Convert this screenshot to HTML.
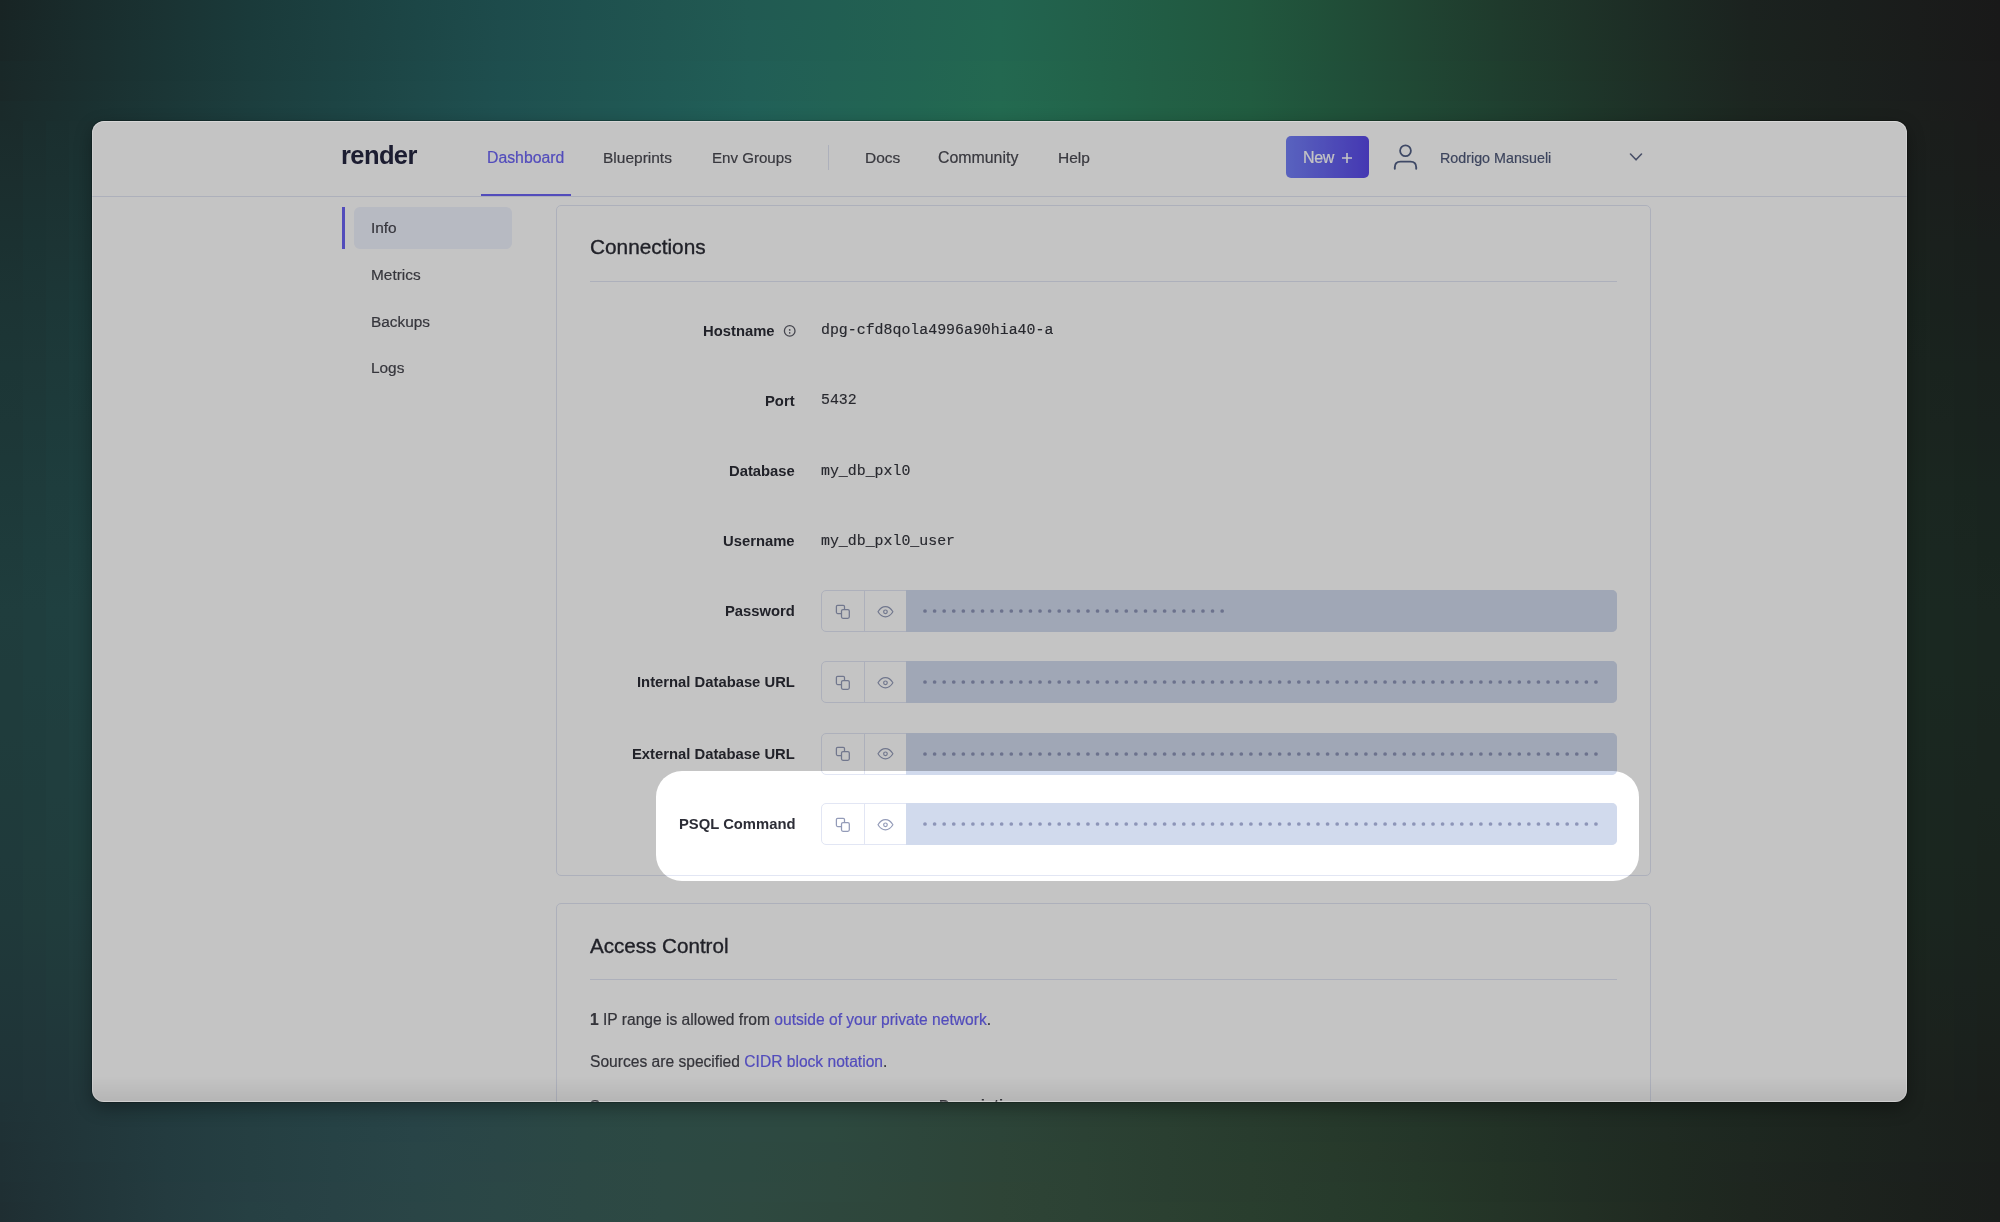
<!DOCTYPE html>
<html><head><meta charset="utf-8"><style>
html,body{margin:0;padding:0;width:2000px;height:1222px;overflow:hidden;}
body{position:relative;background:#1b2222;font-family:"Liberation Sans",sans-serif;}
#bg{position:absolute;left:0;top:0;width:2000px;height:1222px;background:#1a1c1c;}
.band{position:absolute;}
#win{position:absolute;left:92px;top:121px;width:1815px;height:981px;border-radius:12px;overflow:hidden;background:#fff;box-shadow:0 0 0 1px rgba(0,0,0,0.2),0 6px 18px rgba(0,0,0,0.32);}
#in{position:absolute;left:-92px;top:-121px;width:2000px;height:1222px;}
.t{position:absolute;white-space:nowrap;line-height:1;will-change:transform;}
</style></head><body>
<div id="bg"></div>
<div class="band" style="left:0;top:0.00px;width:2000px;height:20.67px;background:linear-gradient(90deg,#182424 0.0%,#192c2c 4.2%,#1a3333 8.3%,#1a3a3a 12.5%,#1b4040 16.7%,#1c4646 20.8%,#1d4b4b 25.0%,#1e504e 29.2%,#205550 33.3%,#215a52 37.5%,#215e52 41.7%,#226151 45.8%,#226450 50.0%,#22604a 54.2%,#215c44 58.3%,#21573e 62.5%,#204e38 66.7%,#204432 70.8%,#1f3a2c 75.0%,#1e3228 79.2%,#1c2a23 83.3%,#1b221f 87.5%,#1a1f1d 91.7%,#1a1c1b 95.8%,#191919 100.0%);"></div>
<div class="band" style="left:0;top:20.17px;width:2000px;height:20.67px;background:linear-gradient(90deg,#182626 0.0%,#192d2d 4.2%,#1a3434 8.3%,#1a3b3b 12.5%,#1c4141 16.7%,#1c4646 20.8%,#1e4c4c 25.0%,#1f514f 29.2%,#205651 33.3%,#215c54 37.5%,#215f52 41.7%,#226251 45.8%,#226650 50.0%,#22614a 54.2%,#215d44 58.3%,#21583e 62.5%,#204f39 66.7%,#204533 70.8%,#1f3c2d 75.0%,#1e3328 79.2%,#1c2b24 83.3%,#1b231f 87.5%,#1b201d 91.7%,#1a1c1b 95.8%,#191919 100.0%);"></div>
<div class="band" style="left:0;top:40.33px;width:2000px;height:20.67px;background:linear-gradient(90deg,#192626 0.0%,#1a2e2e 4.2%,#1a3535 8.3%,#1b3c3c 12.5%,#1c4141 16.7%,#1d4747 20.8%,#1e4d4d 25.0%,#1f5250 29.2%,#205752 33.3%,#215c54 37.5%,#216053 41.7%,#226352 45.8%,#226650 50.0%,#22624a 54.2%,#215e45 58.3%,#21593f 62.5%,#205039 66.7%,#204633 70.8%,#1f3c2e 75.0%,#1e3429 79.2%,#1d2c24 83.3%,#1b241f 87.5%,#1b201d 91.7%,#1a1d1b 95.8%,#191919 100.0%);"></div>
<div class="band" style="left:0;top:60.50px;width:2000px;height:20.67px;background:linear-gradient(90deg,#192828 0.0%,#1a2e2e 4.2%,#1a3535 8.3%,#1b3c3c 12.5%,#1c4242 16.7%,#1d4848 20.8%,#1e4e4e 25.0%,#1f5350 29.2%,#205853 33.3%,#215e56 37.5%,#226154 41.7%,#226452 45.8%,#236850 50.0%,#22634a 54.2%,#225e45 58.3%,#215a3f 62.5%,#20503a 66.7%,#204734 70.8%,#1f3e2e 75.0%,#1e3529 79.2%,#1d2d24 83.3%,#1c2420 87.5%,#1b211e 91.7%,#1a1d1c 95.8%,#1a1a1a 100.0%);"></div>
<div class="band" style="left:0;top:80.67px;width:2000px;height:20.67px;background:linear-gradient(90deg,#1a2828 0.0%,#1a2f2f 4.2%,#1b3636 8.3%,#1c3d3d 12.5%,#1c4343 16.7%,#1e4949 20.8%,#1e4f4f 25.0%,#1f5451 29.2%,#205954 33.3%,#215e56 37.5%,#226254 41.7%,#226552 45.8%,#236850 50.0%,#22644a 54.2%,#225f45 58.3%,#215b40 62.5%,#20513a 66.7%,#204834 70.8%,#1f3e2f 75.0%,#1e362a 79.2%,#1d2d25 83.3%,#1c2520 87.5%,#1b211e 91.7%,#1a1d1c 95.8%,#1a1a1a 100.0%);"></div>
<div class="band" style="left:0;top:100.83px;width:2000px;height:40.17px;background:linear-gradient(90deg,#1a2a2a 0.0%,#1a3030 4.2%,#1b3737 8.3%,#1c3e3e 12.5%,#1d4444 16.7%,#1e4a4a 20.8%,#1f5050 25.0%,#205552 29.2%,#205a55 33.3%,#216058 37.5%,#226355 41.7%,#226652 45.8%,#236a50 50.0%,#22654b 54.2%,#226045 58.3%,#215c40 62.5%,#20523a 66.7%,#204935 70.8%,#1f4030 75.0%,#1e372a 79.2%,#1d2e25 83.3%,#1c2620 87.5%,#1b221e 91.7%,#1b1e1c 95.8%,#1a1a1a 100.0%);"></div>
<div class="band" style="left:0;top:1082.00px;width:2000px;height:40.50px;background:linear-gradient(90deg,#1f3236 0.0%,#21363a 4.2%,#223b3e 8.3%,#243f42 12.5%,#264245 16.7%,#284447 20.8%,#294646 25.0%,#2b4844 29.2%,#2c4943 33.3%,#2d4942 37.5%,#2d4940 41.7%,#2d463c 45.8%,#2c4438 50.0%,#2b4135 54.2%,#293f31 58.3%,#283c2e 62.5%,#26392b 66.7%,#243529 70.8%,#223126 75.0%,#202d24 79.2%,#1e2a22 83.3%,#1d2720 87.5%,#1c241e 91.7%,#1b211d 95.8%,#1a1e1b 100.0%);"></div>
<div class="band" style="left:0;top:1122.00px;width:2000px;height:20.50px;background:linear-gradient(90deg,#1f3135 0.0%,#21363a 4.2%,#233b3f 8.3%,#253f42 12.5%,#264245 16.7%,#284447 20.8%,#2a4646 25.0%,#2b4844 29.2%,#2c4943 33.3%,#2d4942 37.5%,#2d493f 41.7%,#2d463b 45.8%,#2c4438 50.0%,#2b4134 54.2%,#2a3f31 58.3%,#283c2e 62.5%,#26392b 66.7%,#243629 70.8%,#223226 75.0%,#202d24 79.2%,#1f2a22 83.3%,#1d2720 87.5%,#1c241e 91.7%,#1b211d 95.8%,#1a1e1b 100.0%);"></div>
<div class="band" style="left:0;top:1142.00px;width:2000px;height:20.50px;background:linear-gradient(90deg,#1f3034 0.0%,#21363a 4.2%,#233b3f 8.3%,#253f42 12.5%,#274245 16.7%,#294547 20.8%,#2a4646 25.0%,#2b4844 29.2%,#2c4943 33.3%,#2d4941 37.5%,#2d483f 41.7%,#2d463b 45.8%,#2d4437 50.0%,#2b4234 54.2%,#2a3f31 58.3%,#283d2e 62.5%,#273a2b 66.7%,#253629 70.8%,#223226 75.0%,#202e24 79.2%,#1f2a21 83.3%,#1e2720 87.5%,#1c241e 91.7%,#1b211d 95.8%,#1a1e1b 100.0%);"></div>
<div class="band" style="left:0;top:1162.00px;width:2000px;height:20.50px;background:linear-gradient(90deg,#1f3034 0.0%,#213539 4.2%,#233b3f 8.3%,#253f42 12.5%,#274245 16.7%,#294547 20.8%,#2b4646 25.0%,#2c4844 29.2%,#2d4943 33.3%,#2d4941 37.5%,#2e483e 41.7%,#2d463b 45.8%,#2d4437 50.0%,#2c4234 54.2%,#2a3f31 58.3%,#293d2e 62.5%,#273a2c 66.7%,#253729 70.8%,#233326 75.0%,#212e24 79.2%,#1f2a21 83.3%,#1e2620 87.5%,#1c231e 91.7%,#1b201d 95.8%,#1a1d1b 100.0%);"></div>
<div class="band" style="left:0;top:1182.00px;width:2000px;height:20.50px;background:linear-gradient(90deg,#1f2f33 0.0%,#213539 4.2%,#243b3f 8.3%,#263f43 12.5%,#284245 16.7%,#294546 20.8%,#2b4746 25.0%,#2c4844 29.2%,#2d4943 33.3%,#2e4941 37.5%,#2e483e 41.7%,#2e463a 45.8%,#2e4436 50.0%,#2c4234 54.2%,#2a3f31 58.3%,#293d2e 62.5%,#273b2c 66.7%,#253829 70.8%,#233326 75.0%,#212e24 79.2%,#1f2a21 83.3%,#1e261f 87.5%,#1d231e 91.7%,#1b201c 95.8%,#1a1d1b 100.0%);"></div>
<div class="band" style="left:0;top:1202.00px;width:2000px;height:20.50px;background:linear-gradient(90deg,#1f2e32 0.0%,#213539 4.2%,#243b3f 8.3%,#264043 12.5%,#284245 16.7%,#2a4546 20.8%,#2b4746 25.0%,#2c4844 29.2%,#2d4943 33.3%,#2e4940 37.5%,#2e473d 41.7%,#2e463a 45.8%,#2e4436 50.0%,#2c4234 54.2%,#2b4031 58.3%,#293e2e 62.5%,#273b2c 66.7%,#253929 70.8%,#243427 75.0%,#222f24 79.2%,#202a21 83.3%,#1e261f 87.5%,#1d231e 91.7%,#1b201c 95.8%,#1a1d1b 100.0%);"></div>
<div class="band" style="left:0.00px;top:121px;width:23.50px;height:981px;background:linear-gradient(180deg,#1a2b2b 0.0%,#1b2e2e 6.2%,#1b3131 12.5%,#1c3434 18.8%,#1c3636 25.0%,#1d3737 31.2%,#1d3939 37.5%,#1e3b3b 43.8%,#1f3d3d 50.0%,#1f3c3c 56.2%,#1f3c3c 62.5%,#1f3b3b 68.8%,#1f3a3b 75.0%,#1f393a 81.2%,#1f3739 87.5%,#1f3538 93.8%,#1f3337 100.0%);"></div>
<div class="band" style="left:23.00px;top:121px;width:23.50px;height:981px;background:linear-gradient(180deg,#1a2d2d 0.0%,#1b3030 6.2%,#1b3333 12.5%,#1c3535 18.8%,#1d3737 25.0%,#1d3939 31.2%,#1e3b3b 37.5%,#1e3d3d 43.8%,#1f3e3e 50.0%,#1f3e3e 56.2%,#1f3d3d 62.5%,#1f3c3c 68.8%,#203c3c 75.0%,#203b3b 81.2%,#20383a 87.5%,#203639 93.8%,#203438 100.0%);"></div>
<div class="band" style="left:46.00px;top:121px;width:23.50px;height:981px;background:linear-gradient(180deg,#1a2f2f 0.0%,#1b3131 6.2%,#1c3434 12.5%,#1c3737 18.8%,#1d3939 25.0%,#1d3b3b 31.2%,#1e3d3d 37.5%,#1f3e3e 43.8%,#1f4040 50.0%,#1f3f3f 56.2%,#203e3e 62.5%,#203e3e 68.8%,#203d3d 75.0%,#203c3c 81.2%,#203a3b 87.5%,#20373a 93.8%,#203539 100.0%);"></div>
<div class="band" style="left:69.00px;top:121px;width:23.50px;height:981px;background:linear-gradient(180deg,#1b3030 0.0%,#1b3333 6.2%,#1c3636 12.5%,#1c3939 18.8%,#1d3b3b 25.0%,#1e3c3c 31.2%,#1e3e3e 37.5%,#1f4040 43.8%,#204141 50.0%,#204141 56.2%,#204040 62.5%,#203f3f 68.8%,#203f3e 75.0%,#213d3e 81.2%,#213b3c 87.5%,#21393b 93.8%,#21363a 100.0%);"></div>
<div class="band" style="left:1907.00px;top:121px;width:23.75px;height:981px;background:linear-gradient(180deg,#1b1e1c 0.0%,#1a1f1d 6.2%,#1a211d 12.5%,#19231e 18.8%,#1a241f 25.0%,#1a251f 31.2%,#1a2720 37.5%,#1a2821 43.8%,#1a2922 50.0%,#1a2921 56.2%,#1a2821 62.5%,#1a2720 68.8%,#1a2720 75.0%,#1a261f 81.2%,#1b241e 87.5%,#1b221e 93.8%,#1b211d 100.0%);"></div>
<div class="band" style="left:1930.25px;top:121px;width:23.75px;height:981px;background:linear-gradient(180deg,#1a1d1b 0.0%,#1a1e1c 6.2%,#1a201d 12.5%,#19211d 18.8%,#19231e 25.0%,#1a241f 31.2%,#1a2620 37.5%,#1a2721 43.8%,#1a2821 50.0%,#1a2821 56.2%,#1a2720 62.5%,#1a2620 68.8%,#1a261f 75.0%,#1a251f 81.2%,#1a231e 87.5%,#1b221d 93.8%,#1b201c 100.0%);"></div>
<div class="band" style="left:1953.50px;top:121px;width:23.75px;height:981px;background:linear-gradient(180deg,#1a1c1b 0.0%,#1a1d1b 6.2%,#191f1c 12.5%,#19201d 18.8%,#19221e 25.0%,#19231e 31.2%,#19251f 37.5%,#1a2620 43.8%,#1a2721 50.0%,#1a2720 56.2%,#1a2620 62.5%,#1a251f 68.8%,#1a251f 75.0%,#1a241e 81.2%,#1a221e 87.5%,#1a211d 93.8%,#1a1f1c 100.0%);"></div>
<div class="band" style="left:1976.75px;top:121px;width:23.75px;height:981px;background:linear-gradient(180deg,#1a1b1a 0.0%,#1a1c1b 6.2%,#191e1c 12.5%,#191f1c 18.8%,#19211d 25.0%,#19221e 31.2%,#19241f 37.5%,#19251f 43.8%,#1a2620 50.0%,#1a2620 56.2%,#1a251f 62.5%,#1a251f 68.8%,#1a241e 75.0%,#1a231e 81.2%,#1a221d 87.5%,#1a201c 93.8%,#1a1e1b 100.0%);"></div>

<div id="win"><div id="in">
<div class="t" style="left:340.50px;top:143.21px;font-size:25.5px;color:#252640;font-weight:700;font-family:'Liberation Sans',sans-serif;letter-spacing:-0.6px;">render</div>
<div class="t" style="left:487.00px;top:150.13px;font-size:15.8px;color:#6b63f4;font-weight:400;font-family:'Liberation Sans',sans-serif;-webkit-text-stroke-width:0.2px;">Dashboard</div>
<div class="t" style="left:603.00px;top:150.38px;font-size:15.5px;color:#4a4a52;font-weight:400;font-family:'Liberation Sans',sans-serif;-webkit-text-stroke-width:0.2px;">Blueprints</div>
<div class="t" style="left:711.60px;top:150.12px;font-size:15.1px;color:#4a4a52;font-weight:400;font-family:'Liberation Sans',sans-serif;-webkit-text-stroke-width:0.2px;">Env Groups</div>
<div style="position:absolute;left:828px;top:145px;width:1px;height:25px;background:#e2e6f4;"></div>
<div class="t" style="left:865.00px;top:150.38px;font-size:15.5px;color:#4a4a52;font-weight:400;font-family:'Liberation Sans',sans-serif;-webkit-text-stroke-width:0.2px;">Docs</div>
<div class="t" style="left:938.00px;top:150.04px;font-size:15.9px;color:#4a4a52;font-weight:400;font-family:'Liberation Sans',sans-serif;-webkit-text-stroke-width:0.2px;">Community</div>
<div class="t" style="left:1058.00px;top:150.38px;font-size:15.5px;color:#4a4a52;font-weight:400;font-family:'Liberation Sans',sans-serif;-webkit-text-stroke-width:0.2px;">Help</div>
<div style="position:absolute;left:92px;top:196px;width:1815px;height:1px;background:#e2e6f4;"></div>
<div style="position:absolute;left:481px;top:193.5px;width:90px;height:2.5px;background:#6b63f4;"></div>
<div style="position:absolute;left:1285.5px;top:135.8px;width:83.70000000000005px;height:42.69999999999999px;border-radius:5px;background:linear-gradient(90deg,#7481f8,#5a49e8);"></div>
<div class="t" style="left:1303.00px;top:149.96px;font-size:16px;color:#ffffff;font-weight:400;font-family:'Liberation Sans',sans-serif;letter-spacing:-0.4px;-webkit-text-stroke-width:0.2px;">New</div>
<svg style="position:absolute;left:1341px;top:151.5px" width="12" height="12" viewBox="0 0 12 12"><path d="M6 1V11M1 6H11" stroke="#ffffff" stroke-width="1.6" fill="none"/></svg>
<svg style="position:absolute;left:1392px;top:143px" width="27" height="29" viewBox="0 0 27 29"><circle cx="13.5" cy="7.8" r="5.4" stroke="#526085" stroke-width="1.8" fill="none"/><path d="M2.8 25.8V24.3C2.8 20.5 5 18.6 8.5 18.6H18.5C22 18.6 24.2 20.5 24.2 24.3V25.8" stroke="#526085" stroke-width="1.9" fill="none" stroke-linecap="round"/></svg>
<div class="t" style="left:1440.00px;top:151.40px;font-size:14.3px;color:#505a7a;font-weight:400;font-family:'Liberation Sans',sans-serif;-webkit-text-stroke-width:0.2px;">Rodrigo Mansueli</div>
<svg style="position:absolute;left:1628px;top:151px" width="16" height="12" viewBox="0 0 16 12"><path d="M2.5 3L8 8.8L13.5 3" stroke="#5f6887" stroke-width="1.6" fill="none" stroke-linecap="round" stroke-linejoin="round"/></svg>
<div style="position:absolute;left:342px;top:207px;width:3px;height:42px;background:#6b63f4;"></div>
<div style="position:absolute;left:354px;top:207px;width:158px;height:42px;background:#eff2fd;border-radius:6px;"></div>
<div class="t" style="left:370.70px;top:220.36px;font-size:15.4px;color:#47474f;font-weight:400;font-family:'Liberation Sans',sans-serif;-webkit-text-stroke-width:0.2px;">Info</div>
<div class="t" style="left:370.70px;top:266.96px;font-size:15.4px;color:#47474f;font-weight:400;font-family:'Liberation Sans',sans-serif;-webkit-text-stroke-width:0.2px;">Metrics</div>
<div class="t" style="left:370.70px;top:313.66px;font-size:15.4px;color:#47474f;font-weight:400;font-family:'Liberation Sans',sans-serif;-webkit-text-stroke-width:0.2px;">Backups</div>
<div class="t" style="left:370.70px;top:360.36px;font-size:15.4px;color:#47474f;font-weight:400;font-family:'Liberation Sans',sans-serif;-webkit-text-stroke-width:0.2px;">Logs</div>
<div style="position:absolute;left:556px;top:204.5px;width:1095px;height:671.5px;border:1px solid #e2e6f4;border-radius:5px;box-sizing:border-box;"></div>
<div class="t" style="left:590.00px;top:237.39px;font-size:20.8px;color:#2b2c35;font-weight:400;font-family:'Liberation Sans',sans-serif;-webkit-text-stroke:0.35px #2b2c35;">Connections</div>
<div style="position:absolute;left:590px;top:281px;width:1027px;height:1px;background:#e2e6f4;"></div>
<div class="t" style="right:1225.50px;top:324.07px;font-size:14.8px;color:#2c2d36;font-weight:700;font-family:'Liberation Sans',sans-serif;">Hostname</div>
<svg style="position:absolute;left:783px;top:323.5px" width="14" height="14" viewBox="0 0 14 14"><circle cx="6.7" cy="6.9" r="5.3" stroke="#5a5b66" stroke-width="1.3" fill="none"/><circle cx="6.7" cy="5.9" r="0.85" fill="#5a5b66"/><path d="M6.7 7.9V9.7" stroke="#5a5b66" stroke-width="1.2"/></svg>
<div class="t" style="left:821.00px;top:323.39px;font-size:14.9px;color:#33343c;font-weight:400;font-family:'Liberation Mono',monospace;-webkit-text-stroke-width:0.15px;">dpg-cfd8qola4996a90hia40-a</div>
<div class="t" style="right:1205.00px;top:393.97px;font-size:14.8px;color:#2c2d36;font-weight:700;font-family:'Liberation Sans',sans-serif;">Port</div>
<div class="t" style="left:821.00px;top:393.39px;font-size:14.9px;color:#33343c;font-weight:400;font-family:'Liberation Mono',monospace;-webkit-text-stroke-width:0.15px;">5432</div>
<div class="t" style="right:1205.00px;top:464.47px;font-size:14.8px;color:#2c2d36;font-weight:700;font-family:'Liberation Sans',sans-serif;">Database</div>
<div class="t" style="left:821.00px;top:463.89px;font-size:14.9px;color:#33343c;font-weight:400;font-family:'Liberation Mono',monospace;-webkit-text-stroke-width:0.15px;">my_db_pxl0</div>
<div class="t" style="right:1205.00px;top:534.47px;font-size:14.8px;color:#2c2d36;font-weight:700;font-family:'Liberation Sans',sans-serif;">Username</div>
<div class="t" style="left:821.00px;top:533.89px;font-size:14.9px;color:#33343c;font-weight:400;font-family:'Liberation Mono',monospace;-webkit-text-stroke-width:0.15px;">my_db_pxl0_user</div>
<div class="t" style="right:1205.00px;top:603.97px;font-size:14.8px;color:#2c2d36;font-weight:700;font-family:'Liberation Sans',sans-serif;">Password</div>
<div style="position:absolute;left:821px;top:590px;width:796px;height:42px;border:1px solid #e2e6f4;border-radius:5px;box-sizing:border-box;background:#fff;"></div>
<div style="position:absolute;left:906px;top:590px;width:711px;height:42px;background:#d1daed;border-radius:0 5px 5px 0;"></div>
<div style="position:absolute;left:863.5px;top:590px;width:1.0px;height:42px;background:#e2e6f4;"></div>
<svg style="position:absolute;left:832px;top:601.5px" width="20" height="20" viewBox="0 0 20 20"><path d="M9.5 11.5H5.6Q4.4 11.5 4.4 10.3V4.6Q4.4 3.4 5.6 3.4H11.3Q12.5 3.4 12.5 4.6V7.6" stroke="#939bb8" stroke-width="1.25" fill="none"/><rect x="9.5" y="7.6" width="7.8" height="8.7" rx="1.5" stroke="#939bb8" stroke-width="1.25" fill="none"/></svg>
<svg style="position:absolute;left:875px;top:601.5px" width="20" height="20" viewBox="0 0 20 20"><path d="M3 9.7C5.1 6.2 7.5 4.6 10.45 4.6C13.4 4.6 15.8 6.2 17.9 9.7C15.8 13.2 13.4 14.8 10.45 14.8C7.5 14.8 5.1 13.2 3 9.7Z" stroke="#939bb8" stroke-width="1.15" fill="none"/><circle cx="10.45" cy="9.8" r="1.8" stroke="#939bb8" stroke-width="1.2" fill="none"/></svg>
<svg style="position:absolute;left:920.85px;top:607px" width="315" height="8" fill="#8d95b8"><circle cx="4.00" cy="4" r="1.85"/><circle cx="13.59" cy="4" r="1.85"/><circle cx="23.17" cy="4" r="1.85"/><circle cx="32.76" cy="4" r="1.85"/><circle cx="42.34" cy="4" r="1.85"/><circle cx="51.93" cy="4" r="1.85"/><circle cx="61.51" cy="4" r="1.85"/><circle cx="71.09" cy="4" r="1.85"/><circle cx="80.68" cy="4" r="1.85"/><circle cx="90.27" cy="4" r="1.85"/><circle cx="99.85" cy="4" r="1.85"/><circle cx="109.44" cy="4" r="1.85"/><circle cx="119.02" cy="4" r="1.85"/><circle cx="128.61" cy="4" r="1.85"/><circle cx="138.19" cy="4" r="1.85"/><circle cx="147.78" cy="4" r="1.85"/><circle cx="157.36" cy="4" r="1.85"/><circle cx="166.95" cy="4" r="1.85"/><circle cx="176.53" cy="4" r="1.85"/><circle cx="186.12" cy="4" r="1.85"/><circle cx="195.70" cy="4" r="1.85"/><circle cx="205.29" cy="4" r="1.85"/><circle cx="214.87" cy="4" r="1.85"/><circle cx="224.46" cy="4" r="1.85"/><circle cx="234.04" cy="4" r="1.85"/><circle cx="243.63" cy="4" r="1.85"/><circle cx="253.21" cy="4" r="1.85"/><circle cx="262.80" cy="4" r="1.85"/><circle cx="272.38" cy="4" r="1.85"/><circle cx="281.97" cy="4" r="1.85"/><circle cx="291.55" cy="4" r="1.85"/><circle cx="301.14" cy="4" r="1.85"/></svg>
<div class="t" style="right:1205.00px;top:674.97px;font-size:14.8px;color:#2c2d36;font-weight:700;font-family:'Liberation Sans',sans-serif;">Internal Database URL</div>
<div style="position:absolute;left:821px;top:661px;width:796px;height:42px;border:1px solid #e2e6f4;border-radius:5px;box-sizing:border-box;background:#fff;"></div>
<div style="position:absolute;left:906px;top:661px;width:711px;height:42px;background:#d1daed;border-radius:0 5px 5px 0;"></div>
<div style="position:absolute;left:863.5px;top:661px;width:1.0px;height:42px;background:#e2e6f4;"></div>
<svg style="position:absolute;left:832px;top:672.5px" width="20" height="20" viewBox="0 0 20 20"><path d="M9.5 11.5H5.6Q4.4 11.5 4.4 10.3V4.6Q4.4 3.4 5.6 3.4H11.3Q12.5 3.4 12.5 4.6V7.6" stroke="#939bb8" stroke-width="1.25" fill="none"/><rect x="9.5" y="7.6" width="7.8" height="8.7" rx="1.5" stroke="#939bb8" stroke-width="1.25" fill="none"/></svg>
<svg style="position:absolute;left:875px;top:672.5px" width="20" height="20" viewBox="0 0 20 20"><path d="M3 9.7C5.1 6.2 7.5 4.6 10.45 4.6C13.4 4.6 15.8 6.2 17.9 9.7C15.8 13.2 13.4 14.8 10.45 14.8C7.5 14.8 5.1 13.2 3 9.7Z" stroke="#939bb8" stroke-width="1.15" fill="none"/><circle cx="10.45" cy="9.8" r="1.8" stroke="#939bb8" stroke-width="1.2" fill="none"/></svg>
<svg style="position:absolute;left:920.85px;top:678px" width="689" height="8" fill="#8d95b8"><circle cx="4.00" cy="4" r="1.85"/><circle cx="13.59" cy="4" r="1.85"/><circle cx="23.17" cy="4" r="1.85"/><circle cx="32.76" cy="4" r="1.85"/><circle cx="42.34" cy="4" r="1.85"/><circle cx="51.93" cy="4" r="1.85"/><circle cx="61.51" cy="4" r="1.85"/><circle cx="71.09" cy="4" r="1.85"/><circle cx="80.68" cy="4" r="1.85"/><circle cx="90.27" cy="4" r="1.85"/><circle cx="99.85" cy="4" r="1.85"/><circle cx="109.44" cy="4" r="1.85"/><circle cx="119.02" cy="4" r="1.85"/><circle cx="128.61" cy="4" r="1.85"/><circle cx="138.19" cy="4" r="1.85"/><circle cx="147.78" cy="4" r="1.85"/><circle cx="157.36" cy="4" r="1.85"/><circle cx="166.95" cy="4" r="1.85"/><circle cx="176.53" cy="4" r="1.85"/><circle cx="186.12" cy="4" r="1.85"/><circle cx="195.70" cy="4" r="1.85"/><circle cx="205.29" cy="4" r="1.85"/><circle cx="214.87" cy="4" r="1.85"/><circle cx="224.46" cy="4" r="1.85"/><circle cx="234.04" cy="4" r="1.85"/><circle cx="243.63" cy="4" r="1.85"/><circle cx="253.21" cy="4" r="1.85"/><circle cx="262.80" cy="4" r="1.85"/><circle cx="272.38" cy="4" r="1.85"/><circle cx="281.97" cy="4" r="1.85"/><circle cx="291.55" cy="4" r="1.85"/><circle cx="301.14" cy="4" r="1.85"/><circle cx="310.72" cy="4" r="1.85"/><circle cx="320.31" cy="4" r="1.85"/><circle cx="329.89" cy="4" r="1.85"/><circle cx="339.48" cy="4" r="1.85"/><circle cx="349.06" cy="4" r="1.85"/><circle cx="358.65" cy="4" r="1.85"/><circle cx="368.23" cy="4" r="1.85"/><circle cx="377.82" cy="4" r="1.85"/><circle cx="387.40" cy="4" r="1.85"/><circle cx="396.99" cy="4" r="1.85"/><circle cx="406.57" cy="4" r="1.85"/><circle cx="416.16" cy="4" r="1.85"/><circle cx="425.74" cy="4" r="1.85"/><circle cx="435.33" cy="4" r="1.85"/><circle cx="444.91" cy="4" r="1.85"/><circle cx="454.50" cy="4" r="1.85"/><circle cx="464.08" cy="4" r="1.85"/><circle cx="473.67" cy="4" r="1.85"/><circle cx="483.25" cy="4" r="1.85"/><circle cx="492.84" cy="4" r="1.85"/><circle cx="502.42" cy="4" r="1.85"/><circle cx="512.01" cy="4" r="1.85"/><circle cx="521.59" cy="4" r="1.85"/><circle cx="531.18" cy="4" r="1.85"/><circle cx="540.76" cy="4" r="1.85"/><circle cx="550.35" cy="4" r="1.85"/><circle cx="559.93" cy="4" r="1.85"/><circle cx="569.52" cy="4" r="1.85"/><circle cx="579.10" cy="4" r="1.85"/><circle cx="588.69" cy="4" r="1.85"/><circle cx="598.27" cy="4" r="1.85"/><circle cx="607.86" cy="4" r="1.85"/><circle cx="617.44" cy="4" r="1.85"/><circle cx="627.03" cy="4" r="1.85"/><circle cx="636.61" cy="4" r="1.85"/><circle cx="646.20" cy="4" r="1.85"/><circle cx="655.78" cy="4" r="1.85"/><circle cx="665.37" cy="4" r="1.85"/><circle cx="674.95" cy="4" r="1.85"/></svg>
<div class="t" style="right:1205.00px;top:746.77px;font-size:14.8px;color:#2c2d36;font-weight:700;font-family:'Liberation Sans',sans-serif;">External Database URL</div>
<div style="position:absolute;left:821px;top:732.5px;width:796px;height:42.0px;border:1px solid #e2e6f4;border-radius:5px;box-sizing:border-box;background:#fff;"></div>
<div style="position:absolute;left:906px;top:732.5px;width:711px;height:42.0px;background:#d1daed;border-radius:0 5px 5px 0;"></div>
<div style="position:absolute;left:863.5px;top:732.5px;width:1.0px;height:42.0px;background:#e2e6f4;"></div>
<svg style="position:absolute;left:832px;top:744.0px" width="20" height="20" viewBox="0 0 20 20"><path d="M9.5 11.5H5.6Q4.4 11.5 4.4 10.3V4.6Q4.4 3.4 5.6 3.4H11.3Q12.5 3.4 12.5 4.6V7.6" stroke="#939bb8" stroke-width="1.25" fill="none"/><rect x="9.5" y="7.6" width="7.8" height="8.7" rx="1.5" stroke="#939bb8" stroke-width="1.25" fill="none"/></svg>
<svg style="position:absolute;left:875px;top:744.0px" width="20" height="20" viewBox="0 0 20 20"><path d="M3 9.7C5.1 6.2 7.5 4.6 10.45 4.6C13.4 4.6 15.8 6.2 17.9 9.7C15.8 13.2 13.4 14.8 10.45 14.8C7.5 14.8 5.1 13.2 3 9.7Z" stroke="#939bb8" stroke-width="1.15" fill="none"/><circle cx="10.45" cy="9.8" r="1.8" stroke="#939bb8" stroke-width="1.2" fill="none"/></svg>
<svg style="position:absolute;left:920.85px;top:749.5px" width="689" height="8" fill="#8d95b8"><circle cx="4.00" cy="4" r="1.85"/><circle cx="13.59" cy="4" r="1.85"/><circle cx="23.17" cy="4" r="1.85"/><circle cx="32.76" cy="4" r="1.85"/><circle cx="42.34" cy="4" r="1.85"/><circle cx="51.93" cy="4" r="1.85"/><circle cx="61.51" cy="4" r="1.85"/><circle cx="71.09" cy="4" r="1.85"/><circle cx="80.68" cy="4" r="1.85"/><circle cx="90.27" cy="4" r="1.85"/><circle cx="99.85" cy="4" r="1.85"/><circle cx="109.44" cy="4" r="1.85"/><circle cx="119.02" cy="4" r="1.85"/><circle cx="128.61" cy="4" r="1.85"/><circle cx="138.19" cy="4" r="1.85"/><circle cx="147.78" cy="4" r="1.85"/><circle cx="157.36" cy="4" r="1.85"/><circle cx="166.95" cy="4" r="1.85"/><circle cx="176.53" cy="4" r="1.85"/><circle cx="186.12" cy="4" r="1.85"/><circle cx="195.70" cy="4" r="1.85"/><circle cx="205.29" cy="4" r="1.85"/><circle cx="214.87" cy="4" r="1.85"/><circle cx="224.46" cy="4" r="1.85"/><circle cx="234.04" cy="4" r="1.85"/><circle cx="243.63" cy="4" r="1.85"/><circle cx="253.21" cy="4" r="1.85"/><circle cx="262.80" cy="4" r="1.85"/><circle cx="272.38" cy="4" r="1.85"/><circle cx="281.97" cy="4" r="1.85"/><circle cx="291.55" cy="4" r="1.85"/><circle cx="301.14" cy="4" r="1.85"/><circle cx="310.72" cy="4" r="1.85"/><circle cx="320.31" cy="4" r="1.85"/><circle cx="329.89" cy="4" r="1.85"/><circle cx="339.48" cy="4" r="1.85"/><circle cx="349.06" cy="4" r="1.85"/><circle cx="358.65" cy="4" r="1.85"/><circle cx="368.23" cy="4" r="1.85"/><circle cx="377.82" cy="4" r="1.85"/><circle cx="387.40" cy="4" r="1.85"/><circle cx="396.99" cy="4" r="1.85"/><circle cx="406.57" cy="4" r="1.85"/><circle cx="416.16" cy="4" r="1.85"/><circle cx="425.74" cy="4" r="1.85"/><circle cx="435.33" cy="4" r="1.85"/><circle cx="444.91" cy="4" r="1.85"/><circle cx="454.50" cy="4" r="1.85"/><circle cx="464.08" cy="4" r="1.85"/><circle cx="473.67" cy="4" r="1.85"/><circle cx="483.25" cy="4" r="1.85"/><circle cx="492.84" cy="4" r="1.85"/><circle cx="502.42" cy="4" r="1.85"/><circle cx="512.01" cy="4" r="1.85"/><circle cx="521.59" cy="4" r="1.85"/><circle cx="531.18" cy="4" r="1.85"/><circle cx="540.76" cy="4" r="1.85"/><circle cx="550.35" cy="4" r="1.85"/><circle cx="559.93" cy="4" r="1.85"/><circle cx="569.52" cy="4" r="1.85"/><circle cx="579.10" cy="4" r="1.85"/><circle cx="588.69" cy="4" r="1.85"/><circle cx="598.27" cy="4" r="1.85"/><circle cx="607.86" cy="4" r="1.85"/><circle cx="617.44" cy="4" r="1.85"/><circle cx="627.03" cy="4" r="1.85"/><circle cx="636.61" cy="4" r="1.85"/><circle cx="646.20" cy="4" r="1.85"/><circle cx="655.78" cy="4" r="1.85"/><circle cx="665.37" cy="4" r="1.85"/><circle cx="674.95" cy="4" r="1.85"/></svg>
<div class="t" style="right:1205.00px;top:817.07px;font-size:14.8px;color:#2c2d36;font-weight:700;font-family:'Liberation Sans',sans-serif;">PSQL Command</div>
<div style="position:absolute;left:821px;top:803px;width:796px;height:42px;border:1px solid #e2e6f4;border-radius:5px;box-sizing:border-box;background:#fff;"></div>
<div style="position:absolute;left:906px;top:803px;width:711px;height:42px;background:#d1daed;border-radius:0 5px 5px 0;"></div>
<div style="position:absolute;left:863.5px;top:803px;width:1.0px;height:42px;background:#e2e6f4;"></div>
<svg style="position:absolute;left:832px;top:814.5px" width="20" height="20" viewBox="0 0 20 20"><path d="M9.5 11.5H5.6Q4.4 11.5 4.4 10.3V4.6Q4.4 3.4 5.6 3.4H11.3Q12.5 3.4 12.5 4.6V7.6" stroke="#939bb8" stroke-width="1.25" fill="none"/><rect x="9.5" y="7.6" width="7.8" height="8.7" rx="1.5" stroke="#939bb8" stroke-width="1.25" fill="none"/></svg>
<svg style="position:absolute;left:875px;top:814.5px" width="20" height="20" viewBox="0 0 20 20"><path d="M3 9.7C5.1 6.2 7.5 4.6 10.45 4.6C13.4 4.6 15.8 6.2 17.9 9.7C15.8 13.2 13.4 14.8 10.45 14.8C7.5 14.8 5.1 13.2 3 9.7Z" stroke="#939bb8" stroke-width="1.15" fill="none"/><circle cx="10.45" cy="9.8" r="1.8" stroke="#939bb8" stroke-width="1.2" fill="none"/></svg>
<svg style="position:absolute;left:920.85px;top:820px" width="689" height="8" fill="#8d95b8"><circle cx="4.00" cy="4" r="1.85"/><circle cx="13.59" cy="4" r="1.85"/><circle cx="23.17" cy="4" r="1.85"/><circle cx="32.76" cy="4" r="1.85"/><circle cx="42.34" cy="4" r="1.85"/><circle cx="51.93" cy="4" r="1.85"/><circle cx="61.51" cy="4" r="1.85"/><circle cx="71.09" cy="4" r="1.85"/><circle cx="80.68" cy="4" r="1.85"/><circle cx="90.27" cy="4" r="1.85"/><circle cx="99.85" cy="4" r="1.85"/><circle cx="109.44" cy="4" r="1.85"/><circle cx="119.02" cy="4" r="1.85"/><circle cx="128.61" cy="4" r="1.85"/><circle cx="138.19" cy="4" r="1.85"/><circle cx="147.78" cy="4" r="1.85"/><circle cx="157.36" cy="4" r="1.85"/><circle cx="166.95" cy="4" r="1.85"/><circle cx="176.53" cy="4" r="1.85"/><circle cx="186.12" cy="4" r="1.85"/><circle cx="195.70" cy="4" r="1.85"/><circle cx="205.29" cy="4" r="1.85"/><circle cx="214.87" cy="4" r="1.85"/><circle cx="224.46" cy="4" r="1.85"/><circle cx="234.04" cy="4" r="1.85"/><circle cx="243.63" cy="4" r="1.85"/><circle cx="253.21" cy="4" r="1.85"/><circle cx="262.80" cy="4" r="1.85"/><circle cx="272.38" cy="4" r="1.85"/><circle cx="281.97" cy="4" r="1.85"/><circle cx="291.55" cy="4" r="1.85"/><circle cx="301.14" cy="4" r="1.85"/><circle cx="310.72" cy="4" r="1.85"/><circle cx="320.31" cy="4" r="1.85"/><circle cx="329.89" cy="4" r="1.85"/><circle cx="339.48" cy="4" r="1.85"/><circle cx="349.06" cy="4" r="1.85"/><circle cx="358.65" cy="4" r="1.85"/><circle cx="368.23" cy="4" r="1.85"/><circle cx="377.82" cy="4" r="1.85"/><circle cx="387.40" cy="4" r="1.85"/><circle cx="396.99" cy="4" r="1.85"/><circle cx="406.57" cy="4" r="1.85"/><circle cx="416.16" cy="4" r="1.85"/><circle cx="425.74" cy="4" r="1.85"/><circle cx="435.33" cy="4" r="1.85"/><circle cx="444.91" cy="4" r="1.85"/><circle cx="454.50" cy="4" r="1.85"/><circle cx="464.08" cy="4" r="1.85"/><circle cx="473.67" cy="4" r="1.85"/><circle cx="483.25" cy="4" r="1.85"/><circle cx="492.84" cy="4" r="1.85"/><circle cx="502.42" cy="4" r="1.85"/><circle cx="512.01" cy="4" r="1.85"/><circle cx="521.59" cy="4" r="1.85"/><circle cx="531.18" cy="4" r="1.85"/><circle cx="540.76" cy="4" r="1.85"/><circle cx="550.35" cy="4" r="1.85"/><circle cx="559.93" cy="4" r="1.85"/><circle cx="569.52" cy="4" r="1.85"/><circle cx="579.10" cy="4" r="1.85"/><circle cx="588.69" cy="4" r="1.85"/><circle cx="598.27" cy="4" r="1.85"/><circle cx="607.86" cy="4" r="1.85"/><circle cx="617.44" cy="4" r="1.85"/><circle cx="627.03" cy="4" r="1.85"/><circle cx="636.61" cy="4" r="1.85"/><circle cx="646.20" cy="4" r="1.85"/><circle cx="655.78" cy="4" r="1.85"/><circle cx="665.37" cy="4" r="1.85"/><circle cx="674.95" cy="4" r="1.85"/></svg>
<div style="position:absolute;left:556px;top:902.5px;width:1095px;height:297.5px;border:1px solid #e2e6f4;border-radius:5px;box-sizing:border-box;"></div>
<div class="t" style="left:590.00px;top:936.36px;font-size:20.6px;color:#2b2c35;font-weight:400;font-family:'Liberation Sans',sans-serif;-webkit-text-stroke:0.35px #2b2c35;">Access Control</div>
<div style="position:absolute;left:590px;top:979px;width:1027px;height:1px;background:#e2e6f4;"></div>
<div class="t" style="left:590.00px;top:1011.79px;font-size:15.6px;color:#44444c;font-weight:400;font-family:'Liberation Sans',sans-serif;-webkit-text-stroke-width:0.2px;"><b style="font-weight:700">1</b> IP range is allowed from <span style="color:#6b63f4">outside of your private network</span>.</div>
<div class="t" style="left:590.00px;top:1054.29px;font-size:15.6px;color:#44444c;font-weight:400;font-family:'Liberation Sans',sans-serif;-webkit-text-stroke-width:0.2px;">Sources are specified <span style="color:#6b63f4">CIDR block notation</span>.</div>
<div class="t" style="left:590.00px;top:1096.80px;font-size:15px;color:#4a4a52;font-weight:700;font-family:'Liberation Sans',sans-serif;">Source</div>
<div class="t" style="left:939.00px;top:1096.80px;font-size:15px;color:#4a4a52;font-weight:700;font-family:'Liberation Sans',sans-serif;">Description</div>
<div style="position:absolute;left:656px;top:770.5px;width:982.5px;height:110.5px;border-radius:26px;box-shadow:0 0 0 3000px rgba(0,0,0,0.231);"></div>
<div style="position:absolute;left:92px;top:1076px;width:1815px;height:25px;background:linear-gradient(180deg,rgba(0,0,0,0),rgba(0,0,0,0.075));"></div>
</div><div style="position:absolute;left:0;top:0;width:1815px;height:981px;border-radius:12px;box-shadow:inset 0 0 0 1px rgba(255,255,255,0.2),inset 0 1px 0 rgba(255,255,255,0.15);"></div></div>
</body></html>
